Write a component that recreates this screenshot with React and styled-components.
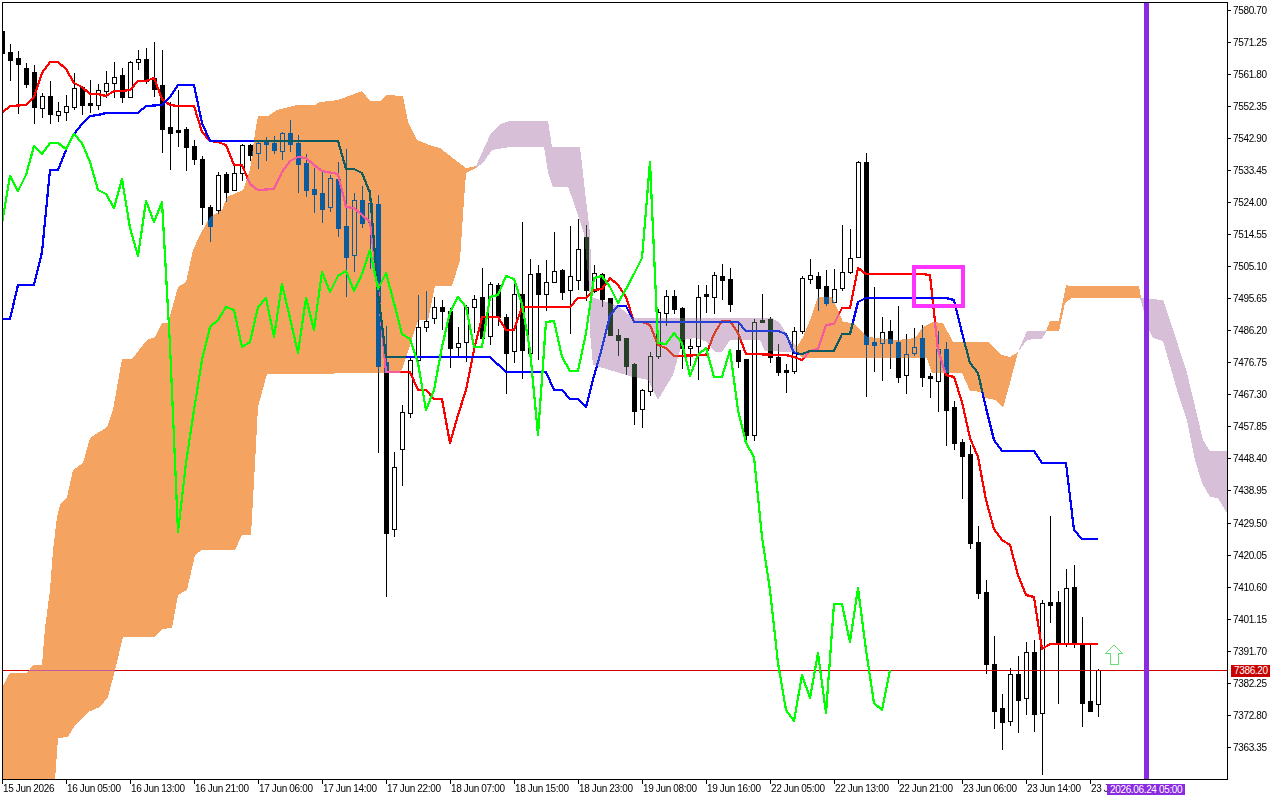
import React from 'react';
import styled, { createGlobalStyle } from 'styled-components';

const GlobalStyle = createGlobalStyle`
	html, body {
		margin: 0;
		background: #fff;
	}
`;

// [high, bodyTop, bodyBottom, low, isBull] in page pixels, one per bar, 8px apart
const bars = [
	[31,31,53,53,0],[44,52,60,80,0],[51,58,64,113,0],[63,68,84,87,0],[65,72,107,123,0],[93,96,108,117,1],[81,96,114,123,0],[102,111,115,121,1],
	[95,106,112,120,1],[73,88,107,109,1],[86,87,105,114,0],[80,103,105,112,0],[84,90,105,109,1],[71,83,91,97,1],[62,77,83,97,1],[68,75,97,102,0],
	[61,62,97,97,1],[50,59,62,69,1],[48,59,81,83,0],[42,78,89,96,0],[50,85,129,152,0],[102,127,133,169,0],[90,130,132,146,0],[127,129,147,170,0],
	[140,146,159,164,0],[156,159,207,224,0],[205,207,226,241,0],[172,175,210,213,1],[172,174,192,201,0],[163,173,190,190,1],[144,145,173,180,1],[144,145,155,160,0],
	[140,143,153,168,1],[137,140,144,160,0],[136,143,150,153,0],[132,133,151,159,1],[120,133,144,151,0],[135,143,164,192,0],[154,163,190,196,0],[168,189,194,212,0],
	[172,193,209,222,0],[175,178,207,211,1],[162,179,228,236,0],[149,226,257,296,0],[193,200,255,271,1],[186,200,223,227,0],[190,203,222,268,1],[195,204,366,452,0],
	[326,362,533,596,0],[452,467,529,536,1],[405,412,449,485,1],[358,360,413,417,1],[295,327,360,360,1],[291,321,327,331,1],[297,307,318,323,1],[300,307,311,329,0],
	[308,311,348,367,0],[327,343,347,355,1],[305,307,342,361,1],[295,299,307,332,1],[268,297,338,347,0],[282,284,336,344,1],[283,285,317,325,0],[314,317,353,393,0],
	[283,294,351,362,1],[222,294,350,378,0],[259,274,353,353,1],[265,273,294,359,0],[260,282,294,310,1],[232,271,282,282,1],[269,270,292,299,0],[226,276,290,333,1],
	[219,249,280,289,1],[225,237,290,300,0],[265,273,291,292,1],[273,274,299,306,0],[298,298,335,335,0],[329,335,340,355,0],[338,338,366,374,0],[363,364,411,424,0],
	[389,390,409,427,1],[352,356,391,395,1],[309,312,356,358,1],[290,296,313,325,1],[290,296,309,313,0],[307,308,348,368,0],[339,346,348,365,1],[285,297,346,379,1],
	[285,294,296,312,0],[272,275,297,313,1],[264,276,280,299,0],[268,279,304,311,0],[323,350,361,367,0],[359,359,435,445,0],[319,322,435,440,1],[294,320,322,322,0],
	[317,319,357,362,0],[344,357,372,375,0],[364,370,372,392,0],[327,331,371,373,1],[276,278,331,333,1],[259,275,279,283,1],[272,276,288,310,0],[270,286,303,305,0],
	[269,289,302,302,1],[225,272,288,290,1],[229,258,272,273,1],[161,162,257,257,1],[153,162,344,396,0],[287,342,345,371,0],[317,332,343,380,1],[320,331,343,368,0],
	[306,342,377,382,0],[334,354,375,393,1],[328,347,353,355,1],[325,338,377,386,0],[373,376,378,397,0],[331,349,381,411,1],[342,349,410,445,0],[401,407,443,449,0],
	[439,442,456,498,0],[445,454,543,548,0],[526,542,593,598,0],[580,592,664,673,0],[636,664,711,728,0],[694,708,722,749,0],[668,674,721,725,1],[656,674,700,732,0],
	[642,652,698,714,1],[640,652,714,731,0],[600,603,713,774,1],[516,602,605,622,0],[591,602,643,703,0],[569,588,643,646,1],[565,587,643,647,0],[617,643,703,726,0],
	[645,701,711,711,0],[669,670,704,716,1],
];

const tenkan = '2,113 10,106 26,105 34,97 42,73 50,62 58,62 66,69 74,83 82,87 90,94 98,94 106,96 114,91 122,91 130,90 138,81 146,81 154,78 162,99 170,105 178,106 194,106 202,132 210,141 218,142 226,145 234,165 242,165 250,184 258,190 274,189 282,172 290,161 298,157 306,158 314,165 322,171 338,174 346,207 354,208 362,215 370,222 378,288 386,372 410,372 418,390 426,390 434,399 442,399 450,443 458,415 466,390 474,350 482,317 498,317 506,330 514,330 522,307 570,307 578,298 586,298 594,290 602,289 610,278 618,285 626,297 634,322 642,322 650,325 658,345 666,348 674,356 706,355 714,334 722,321 730,321 738,333 746,354 786,355 794,357 802,360 810,351 818,349 826,325 834,324 842,308 850,308 858,268 866,274 922,274 930,275 938,350 946,375 954,377 962,402 970,438 978,457 986,500 994,529 1002,540 1010,545 1018,575 1026,595 1034,597 1042,649 1050,644 1098,644';
const kijun = '2,319 10,319 18,285 34,285 42,252 50,170 58,170 66,150 74,134 82,124 90,116 98,115 106,113 138,113 146,106 162,105 170,97 178,85 194,85 202,123 210,141 338,141 346,169 354,169 362,173 370,193 378,293 386,357 490,357 506,372 546,372 554,390 562,390 570,399 578,399 586,407 594,376 602,348 610,315 618,306 626,306 634,322 738,322 746,331 778,331 786,334 794,353 802,354 810,351 834,351 842,334 850,334 858,302 866,298 946,298 954,300 962,333 970,363 978,373 986,408 994,440 1002,451 1034,451 1042,463 1066,463 1074,530 1082,539 1098,539';
const chikou = '2,223 10,176 18,191 26,175 34,146 42,154 50,143 58,143 66,149 74,134 82,143 90,162 98,190 106,194 114,208 122,179 130,228 138,256 146,201 154,222 162,202 170,345 178,532 186,463 194,410 202,360 210,327 218,320 226,307 234,310 242,347 250,342 258,307 266,298 274,337 282,284 290,318 298,353 306,298 314,330 322,272 330,292 338,276 346,271 354,291 362,274 370,250 378,289 386,273 394,303 402,334 410,339 418,363 426,410 434,390 442,347 450,312 458,297 466,307 474,347 482,347 490,297 498,295 506,276 514,279 522,304 530,350 538,435 546,322 554,321 562,357 570,371 578,371 586,333 594,278 602,276 610,287 618,303 626,289 634,274 642,258 650,162 658,343 666,344 674,333 682,343 690,376 698,355 706,348 714,377 722,377 730,350 738,410 746,443 754,457 762,537 770,590 778,663 786,710 794,721 802,675 810,698 818,653 826,713 834,604 842,604 850,642 858,588 866,650 874,703 882,710 890,670';

const orangeClouds = [
	'2,688 7,678 10,673 27,673 33,665 42,665 45,628 50,590 53,550 57,517 60,505 67,497 73,470 83,463 90,438 107,427 113,410 122,359 132,359 147,340 155,337 162,323 168,323 178,287 186,282 193,250 200,235 210,217 222,210 227,197 243,190 250,170 255,133 258,116 268,116 277,110 297,105 315,105 320,102 338,100 362,91 370,101 380,101 387,95 403,96 408,122 417,140 432,146 440,148 458,162 466,168 476,166 476,168 466,173 464,200 460,260 452,286 435,286 428,320 418,320 403,367 400,373 267,374 258,407 255,463 251,535 242,535 235,550 202,550 195,555 187,590 178,595 172,628 162,629 155,637 123,637 115,670 108,697 100,707 88,712 75,725 68,737 58,738 55,780 2,780',
	'797,347 803,337 812,315 818,297 832,297 838,310 843,322 853,323 868,337 897,340 915,338 923,327 933,322 943,323 953,342 988,342 1002,355 1010,357 1018,352 1010,383 1003,408 995,400 985,398 983,392 970,391 962,373 932,373 927,358 803,358 797,353',
	'1046,331 1050,321 1059,321 1066,285 1070,286 1139,286 1141,298 1072,298 1065,303 1059,331',
];
const lilacClouds = [
	'476,166 490,135 500,124 510,121 548,121 552,147 580,147 586,200 590,233 592,297 618,306 633,318 772,318 780,323 790,340 797,347 797,353 790,352 765,351 760,340 730,340 722,352 715,352 707,342 695,338 683,340 673,375 658,400 648,380 633,377 593,365 590,333 590,297 584,233 573,200 568,187 553,187 548,172 544,147 510,147 492,150 483,163 476,168',
	'1018,352 1027,331 1046,331 1046,332 1042,339 1035,339 1027,340',
	'1140,298 1163,300 1170,320 1187,373 1203,440 1210,451 1227,451 1227,513 1218,498 1210,497 1202,483 1195,460 1187,420 1177,390 1163,341 1153,338 1149,330',
];

const priceLevels = ['7580.70','7571.25','7561.80','7552.35','7542.90','7533.45','7524.00','7514.55','7505.10','7495.65','7486.20','7476.75','7467.30','7457.85','7448.40','7438.95','7429.50','7420.05','7410.60','7401.15','7391.70','7382.25','7372.80','7363.35'];
const timeMarks = ['15 Jun 2026','16 Jun 05:00','16 Jun 13:00','16 Jun 21:00','17 Jun 06:00','17 Jun 14:00','17 Jun 22:00','18 Jun 07:00','18 Jun 15:00','18 Jun 23:00','19 Jun 08:00','19 Jun 16:00','22 Jun 05:00','22 Jun 13:00','22 Jun 21:00','23 Jun 06:00','23 Jun 14:00','23 J'];

const Terminal = styled.div`
	position: relative;
	width: 1280px;
	height: 800px;
	padding: 2px 0 0 2px;
	box-sizing: border-box;
	overflow: hidden;
	background: #fff;
	font-family: 'Liberation Sans', Arial, sans-serif;
	font-size: 10px;
	letter-spacing: -0.35px;
	color: #000;
`;

const ChartRow = styled.div`
	display: flex;
	height: 778px;
`;

const Plot = styled.div`
	width: 1226px;
	height: 778px;
	box-sizing: border-box;
	border: 1px solid #000;
	flex: none;
`;

const ChartSvg = styled.svg`
	display: block;
	width: 1224px;
	height: 776px;
	shape-rendering: crispEdges;
`;

const Line = styled.polyline`
	fill: none;
	stroke: ${(props) => props.$color};
	stroke-width: 2.2px;
	stroke-linejoin: round;
`;

const CloudLayer = styled.g`
	mix-blend-mode: difference;
	fill: ${(props) => props.$xor};
`;

const Marker = styled.rect`
	fill: none;
	stroke: #ff33ff;
	stroke-width: 4px;
`;

const Arrow = styled.polygon`
	fill: #fff;
	stroke: #66e070;
	stroke-width: 1px;
`;

const PriceAxis = styled.div`
	position: relative;
	display: flex;
	flex-direction: column;
	gap: 16.07px;
	flex: 1;
`;

const PriceRow = styled.div`
	display: flex;
	align-items: center;
	gap: 2px;
	height: 16px;
`;

const Tick = styled.span`
	width: 3px;
	height: 1px;
	background: #000;
`;

const PriceBadge = styled.div`
	position: absolute;
	left: 3px;
	top: 663px;
	width: 39px;
	height: 12px;
	line-height: 12px;
	padding-left: 3px;
	box-sizing: border-box;
	background: #c80000;
	color: #fff;
`;

const TimeAxis = styled.div`
	display: flex;
`;

const TimeCell = styled.div`
	width: 64px;
	flex: none;
	white-space: nowrap;

	&::before {
		content: '';
		display: block;
		width: 1px;
		height: 4px;
		background: #000;
	}
`;

const TimeLabel = styled.div`
	padding-left: 1px;
	line-height: 10px;
`;

const TimeBadge = styled.div`
	position: absolute;
	left: 1107px;
	top: 784px;
	width: 78px;
	height: 11px;
	line-height: 11px;
	padding-left: 3px;
	box-sizing: border-box;
	background: #8a2be2;
	color: #fff;
`;

const Candle = ({ bar, index }) => {
	const [high, top, bottom, low, bull] = bar;
	const x = 2 + index * 8;
	return (
		<g>
			<rect x={x} y={high} width='1' height={low - high + 1} fill='#000' />
			<rect x={x - 2} y={top} width='5' height={bottom - top + 1} fill='#000' />
			{bull ? <rect x={x - 1} y={top + 1} width='3' height={bottom - top - 1} fill='#fff' /> : null}
		</g>
	);
};

const App = () => {
	return (
		<Terminal>
			<GlobalStyle />
			<ChartRow>
				<Plot>
					<ChartSvg viewBox='3 3 1224 776'>
						<rect x='0' y='0' width='1280' height='800' fill='#fff' />
						{bars.map((bar, i) => (
							<Candle key={i} bar={bar} index={i} />
						))}
						<Line points={tenkan} $color='#ff0000' />
						<Line points={kijun} $color='#0000ff' />
						<rect x='0' y='670' width='1280' height='1' fill='#d00000' />
						<CloudLayer $xor='#0b5b9f'>
							{orangeClouds.map((points) => (
								<polygon key={points} points={points} />
							))}
						</CloudLayer>
						<CloudLayer $xor='#274027'>
							{lilacClouds.map((points) => (
								<polygon key={points} points={points} />
							))}
						</CloudLayer>
						<Line points={chikou} $color='#00ff00' />
						<rect x='1144' y='0' width='5' height='800' fill='#8a2be2' />
						<Marker x='914' y='267' width='49' height='39' />
						<Arrow points='1114,645 1122,653 1118,653 1118,664 1110,664 1110,653 1106,653' />
					</ChartSvg>
				</Plot>
				<PriceAxis>
					{priceLevels.map((price) => (
						<PriceRow key={price}>
							<Tick />
							<span>{price}</span>
						</PriceRow>
					))}
					<PriceBadge>7386.20</PriceBadge>
				</PriceAxis>
			</ChartRow>
			<TimeAxis>
				{timeMarks.map((mark) => (
					<TimeCell key={mark}>
						<TimeLabel>{mark}</TimeLabel>
					</TimeCell>
				))}
			</TimeAxis>
			<TimeBadge>2026.06.24 05:00</TimeBadge>
		</Terminal>
	);
};

export default App;
